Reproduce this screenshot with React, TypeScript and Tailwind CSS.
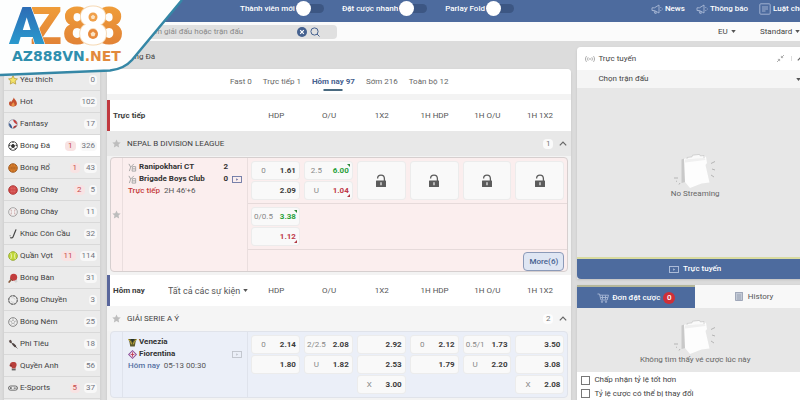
import type { ReactNode } from "react";

type Sport = { name: string; count: number; live?: number; icon: ReactNode };

const Ball = ({ fill, stroke, children }: { fill: string; stroke: string; children?: ReactNode }) => (
  <svg viewBox="0 0 12 12" className="size-[10px]" fill="none" stroke={stroke} strokeWidth="1">
    <circle cx="6" cy="6" r="5.2" fill={fill} />
    {children}
  </svg>
);

const sports: Sport[] = [
  {
    name: "Yêu thích",
    count: 0,
    icon: (
      <svg viewBox="0 0 12 12" className="size-[10px]">
        <path d="M6 .8l1.6 3.4 3.7.5-2.7 2.5.7 3.7L6 9.100 2.700 10.900l.7-3.700L.7 4.700l3.700-.5z" fill="#f3e36a" stroke="#b59a35" strokeWidth=".9" strokeLinejoin="round" />
      </svg>
    ),
  },
  {
    name: "Hot",
    count: 102,
    icon: (
      <svg viewBox="0 0 12 12" className="size-[10px]">
        <path d="M7 .5c.3 2 3.500 3.600 3.700 7C10.800 10 9 11.500 6.200 11.500 3 11.500 1 10 1.200 7.500c.1-1.200.8-2 1.600-2.700l.9 1.400C4.500 4 6.500 3 7 .5z" fill="#c4502f" />
        <path d="M6.500 6c.2 1.300 1.500 1.800 1.500 3.400 0 1.200-.8 1.800-1.900 1.800S4 10.500 4.200 9.200c.2-1.200 1.800-1.600 2.300-3.200z" fill="#e9944b" />
      </svg>
    ),
  },
  {
    name: "Fantasy",
    count: 17,
    icon: (
      <Ball fill="#e9e9ee" stroke="#99a0b0">
        <path d="M6 1a5 5 0 0 1 4.900 5.500C9 6 7 4.500 6 1z" fill="#c43b3b" stroke="none" />
        <path d="M1.200 5C3 5.500 5 8 5 11 2.500 10.500 1 8 1.200 5z" fill="#31558f" stroke="none" />
        <path d="M6 11c2.500 0 4-1.500 4.700-3.500C8.500 7.500 6.500 8.500 6 11z" fill="#a33" stroke="none" />
      </Ball>
    ),
  },
  {
    name: "Bóng Đá",
    count: 326,
    live: 1,
    icon: (
      <Ball fill="#fff" stroke="#333">
        <path d="M6 3.800l2 1.500-.8 2.400H4.800L4 5.300z" fill="#333" />
        <path d="M6 .8v1.400M1.200 5l1.600.3M10.800 5l-1.600.3M3 10.200l.9-1.400M9 10.200l-.9-1.400" strokeWidth="1.600" />
      </Ball>
    ),
  },
  {
    name: "Bóng Rổ",
    count: 43,
    live: 1,
    icon: (
      <Ball fill="#dc7f2c" stroke="#9a561c">
        <path d="M6 1v10M1 6h10M2.500 2.500c2 2 2 5 0 7M9.500 2.500c-2 2-2 5 0 7" strokeWidth=".6" />
      </Ball>
    ),
  },
  {
    name: "Bóng Chày",
    count: 5,
    live: 2,
    icon: (
      <Ball fill="#d04444" stroke="#a93232">
        <path d="M3.800 2v8M8.200 2v8M6 2v8" stroke="#eba7a0" strokeWidth=".7" strokeDasharray="1 .8" />
      </Ball>
    ),
  },
  {
    name: "Bóng Chày",
    count: 11,
    icon: (
      <Ball fill="#f2f0f0" stroke="#999">
        <path d="M3 2c1.500 2.500 1.500 5.500 0 8M9 2c-1.500 2.500-1.500 5.500 0 8" stroke="#b98080" strokeWidth=".8" strokeDasharray="1.200 .6" />
      </Ball>
    ),
  },
  {
    name: "Khúc Côn Cầu",
    count: 32,
    icon: (
      <svg viewBox="0 0 12 12" className="size-[10px]" fill="none" stroke="#444" strokeWidth="1.400" strokeLinecap="round">
        <path d="M9.500 1L6 9.500c-.4 1-1.500 1.200-3 1" />
        <circle cx="2.500" cy="8" r=".6" fill="#444" stroke="none" />
      </svg>
    ),
  },
  {
    name: "Quần Vợt",
    count: 114,
    live: 11,
    icon: (
      <Ball fill="#c2d93a" stroke="#8ba022">
        <path d="M3 2c1.500 2.500 1.500 5.500 0 8M9 2c-1.500 2.500-1.500 5.500 0 8" stroke="#f5f8d6" strokeWidth=".9" />
      </Ball>
    ),
  },
  {
    name: "Bóng Bàn",
    count: 31,
    icon: (
      <svg viewBox="0 0 12 12" className="size-[10px]">
        <circle cx="6.800" cy="5" r="4.200" fill="#c23d3d" />
        <path d="M2.800 6.500l3 3" stroke="#7b2929" strokeWidth="1" />
        <path d="M3.600 8.200L1.400 10.800" stroke="#8a5a3a" strokeWidth="2" strokeLinecap="round" />
        <circle cx="9.500" cy="9.800" r="1.200" fill="#eee" stroke="#999" strokeWidth=".4" />
      </svg>
    ),
  },
  {
    name: "Bóng Chuyền",
    count: 3,
    icon: (
      <Ball fill="#efefef" stroke="#777">
        <circle cx="6" cy="6" r="5.200" stroke="#777" strokeWidth="1.400" strokeDasharray="2.500 1.500" />
        <path d="M4 3.500c2-.8 4 .3 4.500 2M3.500 7c.5 1.500 2.500 2.200 4.200 1.500" stroke="#bbb" strokeWidth=".7" />
      </Ball>
    ),
  },
  {
    name: "Bóng Ném",
    count: 25,
    icon: (
      <Ball fill="#f0f0f0" stroke="#777">
        <path d="M6 3.800l2 1.500-.8 2.400H4.800L4 5.300zM6 1v2.800M1.300 4.500L4 5.300M10.700 4.500L8 5.300M3 10l1.800-2.300M9 10L7.200 7.700" stroke="#999" strokeWidth=".7" />
      </Ball>
    ),
  },
  {
    name: "Phi Tiêu",
    count: 18,
    icon: (
      <svg viewBox="0 0 12 12" className="size-[10px]" fill="none" stroke="#4b4140" strokeLinecap="round">
        <path d="M3 3.500l4 3.500" strokeWidth="1.200" />
        <path d="M1 2.200L3.500 1l1.200 2.600L2.500 5z" fill="#5a4a48" stroke="none" />
        <path d="M6.300 6.300l2.400 2.400" strokeWidth="2.400" />
        <path d="M9 9l2 2" strokeWidth=".8" />
      </svg>
    ),
  },
  {
    name: "Quyền Anh",
    count: 56,
    icon: (
      <svg viewBox="0 0 12 12" className="size-[10px]">
        <path d="M3 2.500C4 .8 8.500.5 9.700 2.300c1 1.500.8 3.600-.5 5.200V9H4.500V7.300C2.600 6.300 2 4.200 3 2.500z" fill="#b8403c" />
        <path d="M2 4.500c1-.6 2.500 0 2.700 1.500L4 7C2.500 6.800 1.500 5.800 2 4.500z" fill="#8f2f2c" />
        <path d="M4.500 9.300h4.700v2H4.500z" fill="#666" />
      </svg>
    ),
  },
  {
    name: "E-Sports",
    count: 37,
    live: 5,
    icon: (
      <svg viewBox="0 0 12 12" className="size-[10px]">
        <rect x=".6" y="3.600" width="10.800" height="5" rx="2.500" fill="#eee" stroke="#555" />
        <path d="M2.200 6.100h2.400M3.400 4.900v2.400" stroke="#444" strokeWidth=".9" />
        <circle cx="7.600" cy="6.100" r=".8" fill="#444" />
        <circle cx="9.500" cy="6.100" r=".8" fill="#444" />
      </svg>
    ),
  },
];

const columns = ["HDP", "O/U", "1X2", "1H HDP", "1H O/U", "1H 1X2"];

type Odd = { label?: string; value: string; move?: "up" | "down" };

const live: Odd[][] = [
  [{ label: "0", value: "1.61" }, { value: "2.09" }],
  [
    { label: "2.5", value: "6.00", move: "up" },
    { label: "U", value: "1.04", move: "down" },
  ],
];

const liveExtra: Odd[] = [
  { label: "0/0.5", value: "3.38", move: "up" },
  { value: "1.12", move: "down" },
];

const today: Odd[][] = [
  [{ label: "0", value: "2.14" }, { value: "1.80" }],
  [
    { label: "2/2.5", value: "2.08" },
    { label: "U", value: "1.82" },
  ],
  [{ value: "2.92" }, { value: "2.53" }, { label: "X", value: "3.00" }],
  [{ label: "0", value: "2.12" }, { value: "1.79" }],
  [
    { label: "0.5/1", value: "1.73" },
    { label: "U", value: "2.20" },
  ],
  [{ value: "3.50" }, { value: "3.08" }, { label: "X", value: "2.08" }],
];

const Caret = ({ className = "" }: { className?: string }) => (
  <svg viewBox="0 0 6 4" className={`pointer-events-none h-[3px] w-[5px] shrink-0 ${className}`}>
    <path d="M0 0h6L3 4z" fill="#555" />
  </svg>
);

const Chevron = () => (
  <svg viewBox="0 0 8 5" className="h-[5px] w-2" fill="none" stroke="#666" strokeWidth="1.200">
    <path d="M.8 4.300L4 1l3.200 3.300" />
  </svg>
);

const Star = () => (
  <svg viewBox="0 0 12 12" className="size-[9px]" fill="#bdbdbd">
    <path d="M6 .5l1.700 3.700 3.900.5-2.900 2.700.8 4L6 9.400l-3.500 2 .8-4L.4 4.700l3.900-.5z" />
  </svg>
);

const Lock = () => (
  <svg viewBox="0 0 12 14" className="h-[14px] w-3">
    <path d="M2.600 4.600C2.600 2.200 4 1.200 6 1.200s3.400 1.300 3.400 3.600V7" fill="none" stroke="#5c5c5c" strokeWidth="1.300" />
    <rect x="1" y="6.600" width="10" height="6.400" rx=".5" fill="#5c5c5c" />
    <path d="M6 8.200v3" stroke="#f5f5f5" strokeWidth="1.200" />
  </svg>
);

const Screen = ({ className }: { className: string }) => (
  <svg viewBox="0 0 10 7" className={`h-[7px] w-[10px] shrink-0 ${className}`} fill="none" stroke="currentColor" strokeWidth=".9">
    <rect x=".5" y=".5" width="9" height="6" />
    <path d="M4.200 2.200v2.600L6.200 3.500z" fill="currentColor" stroke="none" />
  </svg>
);

const Jersey = () => (
  <svg viewBox="0 0 10 10" className="size-[9px]" fill="none" stroke="#a3a3a3" strokeWidth="1">
    <path d="M1 1l2 3.500L1.500 9M6.500 1L3 4.500M5 4h3.500v5H4.500zM5 6.500h3.500" />
  </svg>
);

const Horn = () => (
  <svg viewBox="0 0 12 10" className="h-[10px] w-3" fill="none" stroke="#a9b9d6" strokeWidth=".9">
    <path d="M1 3.800h2.500L8 1v8L3.500 6.500H1zM3 6.600l.8 2.700h1.500L4.700 7M9.800 3v1M9.800 6v1M11.300 4.500v1" />
  </svg>
);

const EmptyDoc = () => (
  <svg viewBox="0 0 44 35" className="h-[35px] w-11">
    <path d="M8.500 5.500l4-1.500v24l-4 1z" fill="#c9c9c9" />
    <path d="M11 4.500L31 2l2 1 1 6-1.500 2 4 17.500-8 1L17 34l-5-6z" fill="#fdfdfd" />
    <path d="M12 5.500L31 3l1.500 3L12 8.500z" fill="#f0f0f0" />
    <path d="M14 5V3.500l5-.7.500-1.600 7-.8.8 1.500L31 1.500V4" fill="#fafafa" stroke="#c6c6c6" strokeWidth=".7" />
    <path d="M38 9.500l4-2M39 15l3 1M38 21l3 2M1 24h4M7 29l-1 1.500M3 27.500l1-.5" stroke="#b5b5b5" strokeWidth="1" />
  </svg>
);

const Toggle = ({ label }: { label: string }) => (
  <label className="flex items-center gap-px font-medium">
    {label}
    <input
      type="checkbox"
      className="relative h-[9px] w-7 appearance-none rounded-full bg-[#3c5683] before:absolute before:-top-[3px] before:left-0 before:size-[15px] before:rounded-full before:bg-white"
    />
  </label>
);

const OddButton = ({ label, value, move }: Odd) => (
  <button className="relative flex h-[19px] w-full items-center rounded-sm border border-black/5 bg-[#f9f9f9] pr-[3px]">
    <span className="w-[23px] text-center text-[#888]">{label}</span>
    <span
      className={`ml-auto font-bold ${move === "up" ? "text-[#27a03a]" : move === "down" ? "text-[#c03a4a]" : "text-[#3c3c3c]"}`}
    >
      {value}
    </span>
    {move && (
      <svg viewBox="0 0 3 3" className={`absolute right-0.5 size-[3px] ${move === "up" ? "top-0.5" : "bottom-0.5"}`}>
        <path d={move === "up" ? "M0 0h3v3z" : "M3 0v3H0z"} fill={move === "up" ? "#2f8a3a" : "#b03a44"} />
      </svg>
    )}
  </button>
);

const OddStack = ({ odds }: { odds: Odd[] }) => (
  <div className="flex flex-col gap-px">
    {odds.map((odd, i) => (
      <OddButton key={i} {...odd} />
    ))}
  </div>
);

const SectionHead = ({ title, accent, children }: { title: string; accent: string; children?: ReactNode }) => (
  <div className={`flex h-[31px] items-center border-l-[3px] bg-white pr-[7px] ${accent}`}>
    <div className="flex w-[142px] shrink-0 items-center justify-between pr-1 pl-[3px]">
      <h2 className="font-bold text-[#3c3c3c]">{title}</h2>
      {children}
    </div>
    <div className="grid flex-1 grid-cols-6 gap-1 text-center text-[#555]">
      {columns.map((c) => (
        <span key={c}>{c}</span>
      ))}
    </div>
  </div>
);

const League = ({ name, count, className }: { name: string; count: number; className: string }) => (
  <div className={`flex h-[25px] items-center gap-[6px] pr-1 pl-[5px] ${className}`}>
    <Star />
    <h3 className="text-[#3f3f3f]">{name}</h3>
    <span className="ml-auto rounded-sm bg-white/80 px-[3px] text-[#777]">{count}</span>
    <Chevron />
  </div>
);

const Logo = () => (
  <a href="#" aria-label="AZ888VN.NET" className="absolute top-0 left-0 z-10">
    <svg viewBox="0 0 184 80" className="h-20 w-[184px]">
      <defs>
        <linearGradient id="blue" x1="0" y1="0" x2="0" y2="1">
          <stop offset="0" stopColor="#2e5fae" />
          <stop offset="1" stopColor="#29a9d6" />
        </linearGradient>
        <linearGradient id="gold" x1="0" y1="0" x2="0" y2="1">
          <stop offset="0" stopColor="#f3a43a" />
          <stop offset="1" stopColor="#dd7a35" />
        </linearGradient>
      </defs>
      <path d="M0 0h182L132 60q-8 9-22 10.500L0 75z" fill="#fdfefe" />
      <path d="M182 0L132 60q-8 9-22 10.500L0 75" fill="none" stroke="#3587a6" strokeWidth="2.500" />
      <g fontFamily="Roboto, sans-serif" fontWeight="900" fontSize="52">
        <text x="30" y="44" fill="url(#gold)">Z</text>
        <text x="9" y="44" fill="url(#blue)" stroke="#fdfefe" strokeWidth="1" paintOrder="stroke">A</text>
        <text x="62" y="44" fill="url(#gold)">8</text>
        <text x="94" y="44" fill="url(#gold)">8</text>
        <text x="78" y="44" fill="#fff" stroke="#f6d9b4" strokeWidth="2" paintOrder="stroke">8</text>
      </g>
      <circle cx="93" cy="17" r="4.500" fill="#f0a04a" />
      <circle cx="93" cy="34" r="5" fill="#e88a3c" />
      <path d="M93 31.500l2.500 2-1 2.800h-3l-1-2.800zM93 14.800l2.200 1.700-.9 2.500h-2.600l-.9-2.500z" fill="#fbe3c4" />
      <text x="12" y="61" fontFamily="DejaVu Sans, sans-serif" fontWeight="700" fontSize="14" fill="#2f8fae">
        AZ888VN<tspan fill="#e2893b">.NET</tspan>
      </text>
    </svg>
  </a>
);

const Header = () => (
  <header className="flex h-[22px] items-center bg-[#4d6b9e] pr-1 pb-[5px] pl-60 whitespace-nowrap text-white">
    <div className="flex gap-[18px]">
      <Toggle label="Thành viên mới" />
      <Toggle label="Đặt cược nhanh" />
      <Toggle label="Parlay Fold" />
    </div>
    <nav className="-mr-[10px] ml-auto flex shrink-0 gap-[11px] font-medium">
      <a href="#" className="flex items-center gap-0.5">
        <Horn />
        News
      </a>
      <a href="#" className="flex items-center gap-0.5">
        <Horn />
        Thông báo
      </a>
      <a href="#" className="flex items-center gap-0.5">
        <svg viewBox="0 0 12 12" className="size-3" fill="none" stroke="#a9b9d6" strokeWidth=".9">
          <rect x=".8" y=".8" width="10.400" height="10.400" rx="1" />
          <path d="M3 4h6M3 6h6M3 8h3.500" />
        </svg>
        Luật chơi
      </a>
    </nav>
  </header>
);

const Toolbar = () => (
  <div className="flex h-[19px] items-center bg-[#fbfbfb] pl-[104px] text-[#444]">
    <form className="flex h-[14px] w-[233px] items-center gap-[3px] rounded-sm bg-[#e0e0e0] pr-[17px] pl-[25px]">
      <input
        aria-label="Tìm kiếm"
        placeholder="Tìm kiếm giải đấu hoặc trận đấu"
        className="min-w-0 flex-1 bg-transparent outline-none placeholder:text-[#888]"
      />
      <button type="reset" aria-label="Xóa">
        <svg viewBox="0 0 10 10" className="size-[10px]">
          <circle cx="5" cy="5" r="5" fill="#45618f" />
          <path d="M3.200 3.200l3.600 3.600M6.800 3.200L3.200 6.800" stroke="#fff" strokeWidth="1.200" />
        </svg>
      </button>
      <button type="submit" aria-label="Tìm">
        <svg viewBox="0 0 10 10" className="size-[10px]" fill="none" stroke="#45618f">
          <circle cx="4.500" cy="4.500" r="3.600" />
          <path d="M7 7l2.500 2.500" />
        </svg>
      </button>
    </form>
    <label className="ml-auto flex items-center gap-[3px]">
      <select aria-label="Kiểu tỷ lệ" className="appearance-none bg-transparent">
        <option>EU</option>
      </select>
      <Caret />
    </label>
    <label className="ml-6 flex items-center gap-0.5">
      <select aria-label="Kiểu hiển thị" className="appearance-none bg-transparent">
        <option>Standard</option>
      </select>
      <Caret />
    </label>
  </div>
);

const Sidebar = () => (
  <nav className="mt-7 w-24 shrink-0 bg-[#ebebeb] shadow-sm">
    {sports.map((s, i) => (
      <a
        key={i}
        href="#"
        className={`flex h-[22px] items-center border-b border-[#d9d9d9] pr-[3px] pl-1 text-[#3f3f3f] ${i === 3 ? "bg-white" : ""}`}
      >
        {s.icon}
        <span className="ml-0.5 whitespace-nowrap">{s.name}</span>
        {s.live && <span className="ml-auto rounded-sm bg-[#f8e3e3] px-[3px] text-[#c64a4a]">{s.live}</span>}
        <span className={`rounded-sm bg-[#f8f8f8] px-0.5 text-[#70757f] ${s.live ? "ml-1" : "ml-auto"}`}>{s.count}</span>
      </a>
    ))}
  </nav>
);

const tabs = ["Fast 0", "Trực tiếp 1", "Hôm nay 97", "Sớm 216", "Toàn bộ 12"];

const Main = () => (
  <main className="ml-[7px] min-w-0 flex-1">
    <h1 className="flex h-7 items-center pt-1 pl-[18px] text-[#444]">Bóng Đá</h1>
    <div className="rounded-t-sm bg-[#f3f3f3] pb-1 shadow-sm">
      <div className="mb-[6px] flex h-[25px] justify-center gap-[11px] rounded-t-sm bg-white">
        {tabs.map((t, i) => (
          <button
            key={t}
            className={`relative ${i === 2 ? "font-bold text-[#46618f] after:absolute after:bottom-[3px] after:left-1/2 after:h-0.5 after:w-[19px] after:-translate-x-1/2 after:bg-[#4a6a80]" : "text-[#666]"}`}
          >
            {t}
          </button>
        ))}
      </div>

      <SectionHead title="Trực tiếp" accent="border-[#c0393f]" />
      <League name="NEPAL B DIVISION LEAGUE" count={1} className="bg-[#e8e8e8]" />
      <article className="mx-[3px] mt-px mb-[3px] flex rounded-sm border border-[#d6cfcf] bg-[#fbeeee]">
        <div className="flex w-3 items-center justify-center border-r border-[#eadede]">
          <Star />
        </div>
        <div className="w-[125px] border-r border-[#eadede] px-[5px] pt-[3px]">
          <div className="flex h-3 items-center gap-0.5 font-bold text-[#333]">
            <Jersey />
            Ranipokhari CT
            <span className="mr-3.5 ml-auto">2</span>
          </div>
          <div className="flex h-3 items-center gap-0.5 font-bold text-[#333]">
            <Jersey />
            Brigade Boys Club
            <span className="mr-0.5 ml-auto">0</span>
            <Screen className="text-[#6b76a3]" />
          </div>
          <p className="flex h-3 items-center gap-1 text-[#555]">
            <span className="font-medium text-[#c63b3b]">Trực tiếp</span>2H 46'+6
          </p>
        </div>
        <div className="flex-1">
          <div className="grid grid-cols-6 gap-1 border-b border-[#e6dada] p-[3px]">
            {live.map((odds, i) => (
              <OddStack key={i} odds={odds} />
            ))}
            {columns.slice(2).map((c) => (
              <button
                key={c}
                disabled
                aria-label={c}
                className="flex items-center justify-center rounded-sm border border-black/5 bg-[#f9f9f9]"
              >
                <Lock />
              </button>
            ))}
          </div>
          <div className="grid grid-cols-6 gap-1 border-b border-[#e6dada] p-[3px]">
            <OddStack odds={liveExtra} />
          </div>
          <div className="flex justify-end px-[3px] pt-0.5">
            <button className="h-[19px] w-[41px] rounded-sm border border-[#8c9ab8] bg-[#dfe6f3] font-medium text-[#46618f]">
              More(6)
            </button>
          </div>
        </div>
      </article>

      <SectionHead title="Hôm nay" accent="border-[#5a679c]">
        <label className="flex items-center gap-0.5 text-[9px] text-[#555]">
          <select aria-label="Sự kiện" className="appearance-none bg-transparent">
            <option>Tất cả các sự kiện</option>
          </select>
          <Caret />
        </label>
      </SectionHead>
      <League name="GIẢI SERIE A Ý" count={2} className="bg-[#f5f5f5]" />
      <article className="mx-[3px] flex rounded-sm border border-[#e0e3ea] bg-[#ebeff8]">
        <div className="w-3 border-r border-[#dfe3ec]" />
        <div className="w-[125px] border-r border-[#dfe3ec] px-[5px] pt-1">
          <div className="flex h-3 items-center gap-0.5 font-bold text-[#333]">
            <svg viewBox="0 0 10 10" className="size-[9px]">
              <path d="M0 1h10L8.500 4 7.500 9.500h-5L1.500 4z" fill="#5c5a2c" />
              <path d="M0 1l3 3 1 3M10 1L7 4 6 7" stroke="#d4b83e" fill="none" />
              <path d="M3 1h4L5 5z" fill="#23312a" />
            </svg>
            Venezia
          </div>
          <div className="flex h-3 items-center gap-0.5 font-bold text-[#333]">
            <svg viewBox="0 0 10 10" className="size-[9px]">
              <path d="M5 0l5 5-5 5-5-5z" fill="#8a4a96" />
              <path d="M5 1.500L8.500 5 5 8.500 1.500 5z" fill="#f1e4ee" />
              <path d="M5 2.500v5M3 5h4" stroke="#c03c55" />
            </svg>
            Fiorentina
            <Screen className="ml-auto text-[#bfc3ca]" />
          </div>
          <p className="flex h-3 items-center gap-1 text-[#555]">
            <span className="font-medium text-[#5671a3]">Hôm nay</span>05-13 00:30
          </p>
        </div>
        <div className="grid flex-1 grid-cols-6 gap-1 p-[3px]">
          {today.map((odds, i) => (
            <OddStack key={i} odds={odds} />
          ))}
        </div>
      </article>
    </div>
  </main>
);

const StreamPanel = () => (
  <section className="rounded-t-sm bg-[#e7e7e7] shadow-sm">
    <div className="flex h-[23px] items-center gap-[3px] rounded-t-sm bg-white pr-1 pl-2 text-[#444]">
      <svg viewBox="0 0 12 8" className="h-2 w-[10px]" fill="none" stroke="#999">
        <circle cx="6" cy="4" r="1" fill="#999" stroke="none" />
        <path d="M3.800 2c-.8 1.200-.8 2.800 0 4M8.200 2c.8 1.200.8 2.800 0 4M1.800.6C.2 2.600.2 5.400 1.800 7.400M10.200.6c1.600 2 1.600 4.800 0 6.800" />
      </svg>
      <h2>Trực tuyến</h2>
      <button aria-label="Thu nhỏ" className="mr-1 ml-auto">
        <svg viewBox="0 0 8 8" className="size-[7px]" fill="none" stroke="#999" strokeWidth=".9">
          <path d="M8 0L5 3M5 1v2h2M0 8l3-3M1 5h2v2" />
        </svg>
      </button>
      <button aria-label="Đóng mở" className="border-l border-[#ddd] pr-1 pl-[5px]">
        <Chevron />
      </button>
    </div>
    <label className="flex h-[18px] items-center bg-[#f5f5f5] pr-3 pl-[21px] text-[#444]">
      <select aria-label="Trận đấu" className="flex-1 appearance-none bg-transparent">
        <option>Chọn trận đấu</option>
      </select>
      <Caret />
    </label>
    <div className="flex h-[169px] flex-col items-center justify-center pt-2 text-[#666]">
      <EmptyDoc />
      <p>No Streaming</p>
    </div>
    <button className="flex h-[22px] w-full items-center justify-center gap-1 rounded-b-sm border-t-2 border-[#d9dba0] bg-[#4d6b9e] font-medium text-white">
      <Screen className="text-[#b6c4de]" />
      Trực tuyến
    </button>
  </section>
);

const BetSlip = () => (
  <section className="mt-1.5 bg-[#e7e7e7] shadow-sm">
    <div className="grid h-[23px] grid-cols-2">
      <button className="flex items-center justify-center gap-[3px] border-t-2 border-[#b5b79a] bg-[#4d6b9e] font-medium text-white">
        <svg viewBox="0 0 12 10" className="h-[10px] w-3" fill="none" stroke="#a9b9d6" strokeWidth=".9">
          <path d="M.5 1h2l1.500 6h6.200l1.300-4.800H3M3.500 4.500h7.300M5.500 2.500v4M8.500 2.500v4" />
          <circle cx="5" cy="8.800" r=".7" />
          <circle cx="9" cy="8.800" r=".7" />
        </svg>
        Đơn đặt cược
        <span className="flex size-3 items-center justify-center rounded-full bg-[#cf2f38]">0</span>
      </button>
      <button className="flex items-center justify-center gap-[5px] bg-[#f8f8f8] text-[#555]">
        <svg viewBox="0 0 8 9" className="h-[9px] w-2" fill="#c3cad6" stroke="#8f9aad" strokeWidth=".8">
          <rect x=".6" y=".5" width="6.800" height="8" />
          <path d="M2 3h4M2 5h4M2 7h4" />
        </svg>
        History
      </button>
    </div>
    <div className="flex h-16 flex-col items-center justify-center pt-1 text-[#666]">
      <EmptyDoc />
      <p>Không tìm thấy vé cược lúc này</p>
    </div>
    <div className="flex flex-col bg-white px-1 py-px text-[#444]">
      <label className="flex h-[14px] items-center gap-1">
        <input type="checkbox" className="size-[9px] appearance-none border border-[#777] bg-white" />
        Chấp nhận tỷ lệ tốt hơn
      </label>
      <label className="flex h-[13px] items-center gap-1">
        <input type="checkbox" className="size-[9px] appearance-none border border-[#777] bg-white" />
        Tỷ lệ cược có thể bị thay đổi
      </label>
    </div>
  </section>
);

export default function App() {
  return (
    <div className="relative min-h-screen overflow-hidden bg-[#dcdcdc] font-[Roboto,sans-serif] text-[8px] leading-[10px]">
      <Logo />
      <Header />
      <Toolbar />
      <div className="flex pl-1">
        <Sidebar />
        <Main />
        <aside className="-mr-[13px] ml-1.5 w-[29.6%] shrink-0 pt-1.5">
          <StreamPanel />
          <BetSlip />
        </aside>
      </div>
    </div>
  );
}
